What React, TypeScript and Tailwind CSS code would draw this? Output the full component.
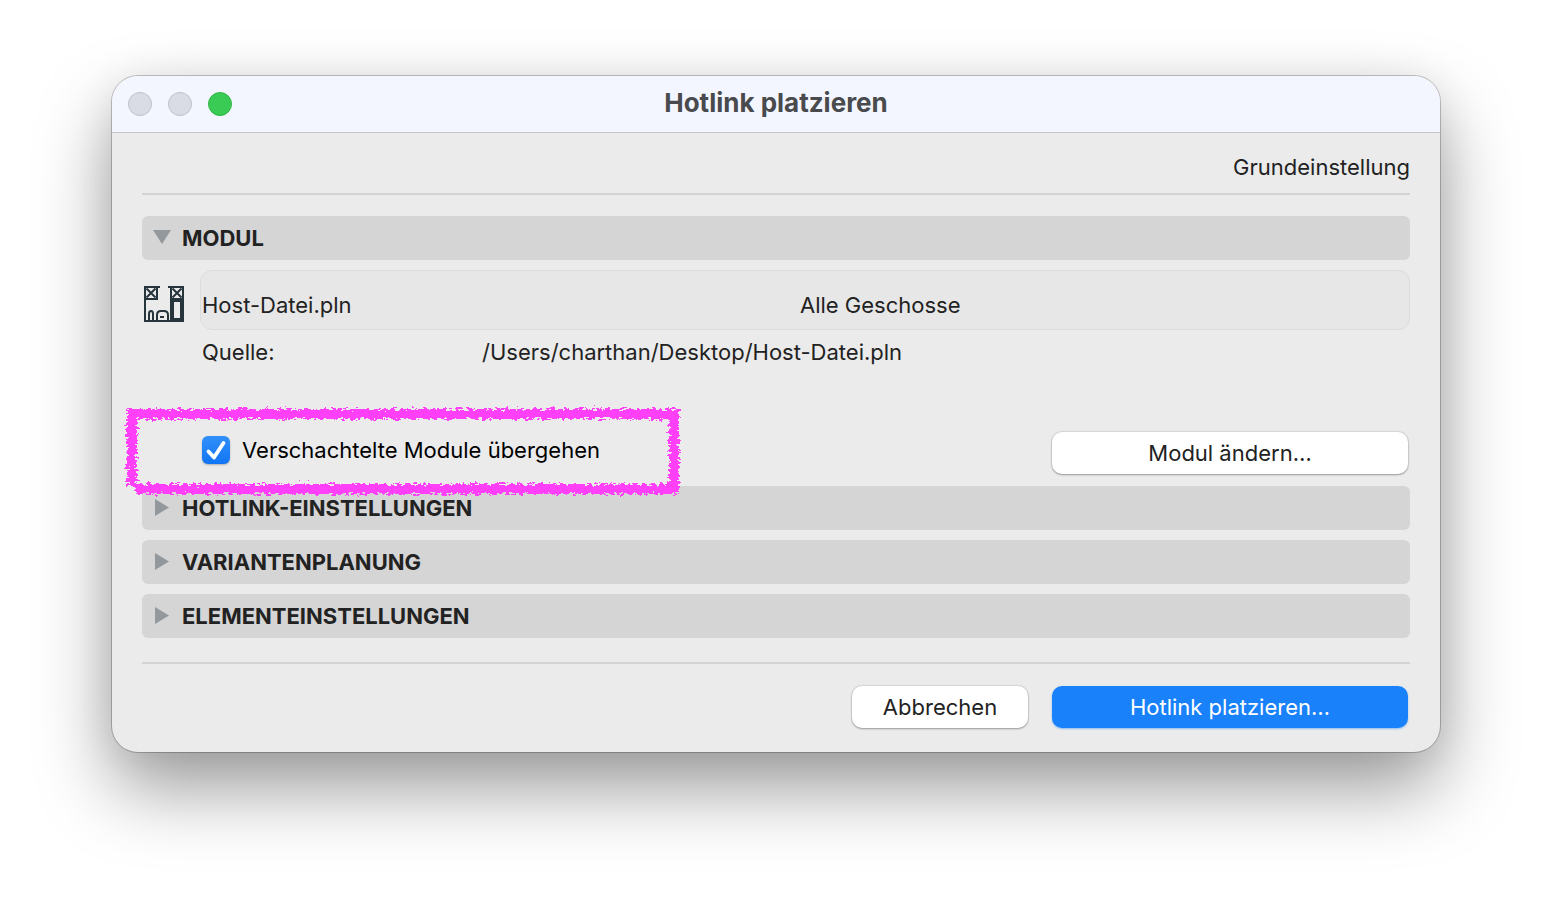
import { useState, type ReactNode } from "react";

function BuildingIcon() {
  return (
    <svg width="40" height="36" viewBox="0 0 40 36" fill="none" aria-hidden="true" className="block shrink-0">
      <g stroke="#26343c" strokeWidth="2">
        <path d="M1 0v36M0 35h40M0 1h16M24 1h16M13 1v12H1" />
        <path d="M2.500 2.500l9 9M11.500 2.500l-9 9M28.500 2.500l9 9M37.500 2.500l-9 9" />
        <path d="M5 35v-7q0-3 2-3t2 3v7M13 35v-6q0-4 4-4h3q4 0 4 4v6" />
        <path d="M16 31h4" />
      </g>
      <path d="M26 0h2v12h10V0h2v36H26zM30 16v16h6V16z" fill="#26343c" fillRule="evenodd" />
    </svg>
  );
}

function Triangle({ open }: { open: boolean }) {
  return (
    <svg width="18" height="18" viewBox="0 0 18 18" aria-hidden="true" className="block shrink-0" fill="#92989c">
      <path d={open ? "M0 1h18L9 15z" : "M2 0l14 8.500L2 17z"} />
    </svg>
  );
}

function SectionHeader({ title, open = false }: { title: string; open?: boolean }) {
  return (
    <h2>
      <button
        type="button"
        aria-expanded={open}
        className="flex h-11 w-full items-center gap-[11px] rounded-md bg-[#d5d5d5] pl-[11px] text-left text-[22px] leading-7 font-bold text-[#222]"
      >
        <Triangle open={open} />
        <span>{title}</span>
      </button>
    </h2>
  );
}

function PushButton({ children, primary = false, wide = false }: { children: ReactNode; primary?: boolean; wide?: boolean }) {
  const tone = primary
    ? "bg-[#1981fa] text-white shadow-[0_1px_2px_rgba(25,129,250,0.45)]"
    : "bg-white text-[#222] shadow-[0_0_1px_1px_rgba(0,0,0,0.08),0_1px_2px_rgba(0,0,0,0.3)]";
  return (
    <button
      type="button"
      className={`h-[42px] rounded-[10px] text-[22px] leading-7 ${wide ? "w-[356px]" : "w-44"} ${tone}`}
    >
      {children}
    </button>
  );
}

function BrushFrame() {
  return (
    <svg
      width="576"
      height="108"
      viewBox="0 0 576 108"
      fill="none"
      aria-hidden="true"
      className="pointer-events-none absolute -top-[35px] -left-[27px] z-10"
    >
      <defs>
        <filter id="brush" x="0" y="0" width="576" height="108" filterUnits="userSpaceOnUse" colorInterpolationFilters="sRGB">
          <feTurbulence type="fractalNoise" baseFrequency="0.22 0.4" numOctaves="3" seed="8" result="noise" />
          <feDisplacementMap in="SourceGraphic" in2="noise" scale="10" xChannelSelector="R" yChannelSelector="G" />
        </filter>
      </defs>
      <g stroke="#ff40f8" strokeWidth="10" filter="url(#brush)">
        <path d="M12 17H564" />
        <path d="M17 13V89" />
        <path d="M559 13V97" />
        <path d="M20 92H564" />
      </g>
    </svg>
  );
}

export default function App() {
  const [skipNested, setSkipNested] = useState(true);

  return (
    <div className="min-h-screen bg-white px-28 pt-[76px] pb-[148px] font-['Inter',sans-serif] text-[22px] leading-7 text-[#222]">
      <main className="rounded-[26px] bg-[#ebebeb] shadow-[0_0_0_1px_rgba(0,0,0,0.22),0_36px_76px_rgba(0,0,0,0.4),0_0_40px_rgba(0,0,0,0.06)]">
        <header className="grid h-[57px] grid-cols-[1fr_auto_1fr] items-center rounded-t-[26px] border-b border-[#c4c4c7] bg-[#f3f6fe] px-4">
          <div className="flex gap-4">
            <button type="button" aria-label="Schließen" className="size-6 rounded-full border border-[#bfc1c9] bg-[#d9dce4]" />
            <button type="button" aria-label="Minimieren" className="size-6 rounded-full border border-[#bfc1c9] bg-[#d9dce4]" />
            <button type="button" aria-label="Zoomen" className="size-6 rounded-full border border-[#30b544] bg-[#3acb54]" />
          </div>
          <h1 className="pb-0.5 text-[26px] leading-8 font-bold text-[#494a4d]">Hotlink platzieren</h1>
        </header>

        <div className="px-[30px] pt-5 pb-6">
          <p className="border-b-2 border-[#d3d3d3] pb-3 text-right">Grundeinstellung</p>

          <div className="mt-[21px]">
            <SectionHeader title="MODUL" open />
            <div className="mt-2.5 flex items-center gap-4 pl-0.5">
              <div className="pt-2">
                <BuildingIcon />
              </div>
              <div className="grid h-[60px] flex-1 grid-cols-[598px_1fr] items-center rounded-xl border border-[#dcdcdc] bg-[#e7e7e7] pt-2.5 pl-px">
                <span>Host-Datei.pln</span>
                <span>Alle Geschosse</span>
              </div>
            </div>
            <div className="mt-2 grid grid-cols-[280px_1fr] pl-[60px]">
              <span>Quelle:</span>
              <span>/Users/charthan/Desktop/Host-Datei.pln</span>
            </div>
            <div className="relative mt-[66px] flex items-start justify-between pr-0.5 pl-[60px]">
              <label className="flex items-center gap-3 pt-1 text-black">
                <span className="relative block size-7">
                  <input
                    type="checkbox"
                    checked={skipNested}
                    onChange={(e) => setSkipNested(e.target.checked)}
                    className="block size-7 appearance-none rounded-md bg-white shadow-[0_1px_2px_rgba(0,0,0,0.25)] checked:bg-linear-to-b checked:from-[#3290fa] checked:to-[#0f75f5]"
                  />
                  {skipNested && (
                    <svg viewBox="0 0 28 28" fill="none" aria-hidden="true" className="pointer-events-none absolute inset-0 size-7">
                      <path d="M6.500 15.500l5.500 6L21.500 7" stroke="#fff" strokeWidth="3.800" strokeLinecap="round" strokeLinejoin="round" />
                    </svg>
                  )}
                </span>
                <span>Verschachtelte Module übergehen</span>
              </label>
              <PushButton wide>Modul ändern…</PushButton>
              <BrushFrame />
            </div>
          </div>

          <div className="mt-3 flex flex-col gap-2.5">
            <SectionHeader title="HOTLINK-EINSTELLUNGEN" />
            <SectionHeader title="VARIANTENPLANUNG" />
            <SectionHeader title="ELEMENTEINSTELLUNGEN" />
          </div>

          <footer className="mt-6 flex justify-end gap-6 border-t-2 border-[#d3d3d3] pt-[22px] pr-0.5">
            <PushButton>Abbrechen</PushButton>
            <PushButton primary wide>
              Hotlink platzieren…
            </PushButton>
          </footer>
        </div>
      </main>
    </div>
  );
}
